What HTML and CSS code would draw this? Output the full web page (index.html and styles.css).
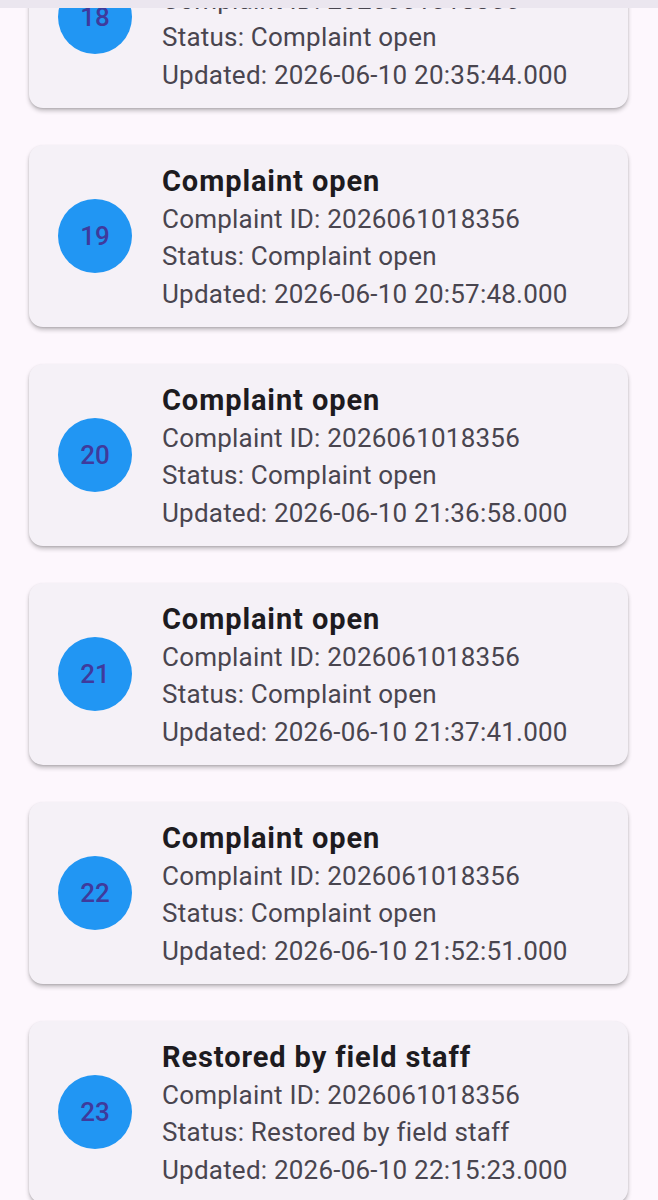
FILE: index.html
```html
<!DOCTYPE html>
<html>
<head>
<meta charset="utf-8">
<link rel="stylesheet" href="styles.css">
</head>
<body>
<div class="topbar"></div>
<div class="list">
  <div class="card">
    <div class="avatar">18</div>
    <div class="info">
      <div class="title">Complaint open</div>
      <div class="line">Complaint ID: 2026061018356</div>
      <div class="line">Status: Complaint open</div>
      <div class="line">Updated: 2026-06-10 20:35:44.000</div>
    </div>
  </div>
  <div class="card">
    <div class="avatar">19</div>
    <div class="info">
      <div class="title">Complaint open</div>
      <div class="line">Complaint ID: 2026061018356</div>
      <div class="line">Status: Complaint open</div>
      <div class="line">Updated: 2026-06-10 20:57:48.000</div>
    </div>
  </div>
  <div class="card">
    <div class="avatar">20</div>
    <div class="info">
      <div class="title">Complaint open</div>
      <div class="line">Complaint ID: 2026061018356</div>
      <div class="line">Status: Complaint open</div>
      <div class="line">Updated: 2026-06-10 21:36:58.000</div>
    </div>
  </div>
  <div class="card">
    <div class="avatar">21</div>
    <div class="info">
      <div class="title">Complaint open</div>
      <div class="line">Complaint ID: 2026061018356</div>
      <div class="line">Status: Complaint open</div>
      <div class="line">Updated: 2026-06-10 21:37:41.000</div>
    </div>
  </div>
  <div class="card">
    <div class="avatar">22</div>
    <div class="info">
      <div class="title">Complaint open</div>
      <div class="line">Complaint ID: 2026061018356</div>
      <div class="line">Status: Complaint open</div>
      <div class="line">Updated: 2026-06-10 21:52:51.000</div>
    </div>
  </div>
  <div class="card">
    <div class="avatar">23</div>
    <div class="info">
      <div class="title">Restored by field staff</div>
      <div class="line">Complaint ID: 2026061018356</div>
      <div class="line">Status: Restored by field staff</div>
      <div class="line">Updated: 2026-06-10 22:15:23.000</div>
    </div>
  </div>
</div>
</body>
</html>
```
FILE: styles.css
```css
html, body {
  margin: 0;
  padding: 0;
  height: 1200px;
  overflow: hidden;
  background: #fdf7fd;
  font-family: Roboto, "Noto Sans", sans-serif;
}
.topbar {
  position: fixed;
  top: 0;
  left: 0;
  right: 0;
  height: 8px;
  background: #ebe6ef;
  z-index: 10;
}
.list {
  display: flex;
  flex-direction: column;
  gap: 37px;
  margin-top: -74px;
  padding: 0 30px 0 29px;
}
.card {
  height: 182px;
  box-sizing: border-box;
  background: #f5f1f7;
  border-radius: 14px;
  box-shadow: 0 3px 4px rgba(0, 0, 0, 0.22), 0 1px 2px rgba(0, 0, 0, 0.12);
  display: flex;
  align-items: center;
  padding-left: 29px;
  gap: 30px;
}
.avatar {
  width: 74px;
  height: 74px;
  border-radius: 50%;
  background: #2196f3;
  color: #3f3a9c;
  font-size: 26px;
  font-weight: 500;
  display: flex;
  align-items: center;
  justify-content: center;
  flex: none;
}
.info {
  display: flex;
  flex-direction: column;
  padding-top: 4px;
}
.title {
  font-size: 29px;
  font-weight: 700;
  letter-spacing: 0.9px;
  line-height: 37.5px;
  color: #1d1b20;
}
.line {
  font-size: 26px;
  letter-spacing: 0.22px;
  line-height: 37.5px;
  color: #49454f;
}
```
